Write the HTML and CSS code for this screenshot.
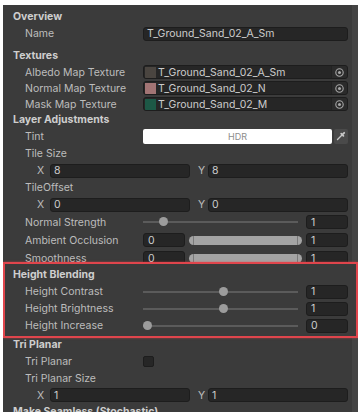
FILE: index.html
```html
<!DOCTYPE html>
<html>
<head>
<meta charset="utf-8">
<link rel="stylesheet" href="styles.css">
</head>
<body>
<div class="panel">
  <div class="group g-top">
    <div class="hdr">Overview</div>
    <div class="row"><span class="lbl">Name</span><div class="field">T_Ground_Sand_02_A_Sm</div></div>
  </div>
  <div class="sep"></div>
  <div class="group">
    <div class="hdr h-tex">Textures</div>
    <div class="row tex"><span class="lbl">Albedo Map Texture</span>
      <div class="field obj"><span class="sw sw-a"></span><span class="otext">T_Ground_Sand_02_A_Sm</span><span class="pick"><svg width="9" height="9" viewBox="0 0 9 9"><circle cx="4.5" cy="4.5" r="3.7" fill="none" stroke="#a8a8a8" stroke-width="1.1"/><circle cx="4.5" cy="4.5" r="1.5" fill="#a8a8a8"/></svg></span></div></div>
    <div class="row tex"><span class="lbl">Normal Map Texture</span>
      <div class="field obj"><span class="sw sw-n"></span><span class="otext">T_Ground_Sand_02_N</span><span class="pick"><svg width="9" height="9" viewBox="0 0 9 9"><circle cx="4.5" cy="4.5" r="3.7" fill="none" stroke="#a8a8a8" stroke-width="1.1"/><circle cx="4.5" cy="4.5" r="1.5" fill="#a8a8a8"/></svg></span></div></div>
    <div class="row tex"><span class="lbl">Mask Map Texture</span>
      <div class="field obj"><span class="sw sw-m"></span><span class="otext">T_Ground_Sand_02_M</span><span class="pick"><svg width="9" height="9" viewBox="0 0 9 9"><circle cx="4.5" cy="4.5" r="3.7" fill="none" stroke="#a8a8a8" stroke-width="1.1"/><circle cx="4.5" cy="4.5" r="1.5" fill="#a8a8a8"/></svg></span></div></div>
    <div class="hdr h-la">Layer Adjustments</div>
    <div class="row r18"><span class="lbl">Tint</span>
      <div class="tint"><div class="color">HDR</div><div class="eye"><svg width="10" height="10" viewBox="0 0 10 10"><path d="M1.5 8.5 L6 4" stroke="#c8c8c8" stroke-width="1.4" stroke-linecap="round"/><path d="M5.2 2.6 L7.4 4.8 M6.4 3.6 L8.2 1.8" stroke="#c8c8c8" stroke-width="1.8" stroke-linecap="round"/></svg></div></div></div>
    <div class="row"><span class="lbl">Tile Size</span></div>
    <div class="vec"><span class="vl">X</span><div class="field">8</div><span class="vl vy">Y</span><div class="field">8</div></div>
    <div class="row"><span class="lbl">TileOffset</span></div>
    <div class="vec"><span class="vl">X</span><div class="field">0</div><span class="vl vy">Y</span><div class="field">0</div></div>
    <div class="row r18"><span class="lbl">Normal Strength</span>
      <div class="slider"><div class="track"><span class="knob" style="left:10%"></span></div><div class="field num">1</div></div></div>
    <div class="row r18"><span class="lbl">Ambient Occlusion</span>
      <div class="range"><div class="field num">0</div><div class="rbar"><span class="rb"></span></div><div class="field num">1</div></div></div>
    <div class="row r18"><span class="lbl">Smoothness</span>
      <div class="range"><div class="field num">0</div><div class="rbar"><span class="rb"></span></div><div class="field num">1</div></div></div>
  </div>
  <div class="hl">
    <div class="hdr">Height Blending</div>
    <div class="row"><span class="lbl">Height Contrast</span>
      <div class="slider"><div class="track"><span class="knob" style="left:49%"></span></div><div class="field num">1</div></div></div>
    <div class="row"><span class="lbl">Height Brightness</span>
      <div class="slider"><div class="track"><span class="knob" style="left:49%"></span></div><div class="field num">1</div></div></div>
    <div class="row"><span class="lbl">Height Increase</span>
      <div class="slider"><div class="track"><span class="knob" style="left:0%"></span></div><div class="field num">0</div></div></div>
  </div>
  <div class="group">
    <div class="hdr">Tri Planar</div>
    <div class="row"><span class="lbl">Tri Planar</span><div class="ctl"><span class="check"></span></div></div>
    <div class="row"><span class="lbl">Tri Planar Size</span></div>
    <div class="vec v16"><span class="vl">X</span><div class="field">1</div><span class="vl vy">Y</span><div class="field">1</div></div>
    <div class="hdr">Make Seamless (Stochastic)</div>
  </div>
</div>
</body>
</html>
```
FILE: styles.css
```css
html, body { margin: 0; padding: 0; }
body {
  background: #ffffff;
  font-family: Inter, "Noto Sans", sans-serif;
  font-size: 10.5px;
  color: #bdbdbd;
}
.panel {
  margin: 5px 3px 0 3px;
  height: 407px;
  overflow: hidden;
  background: linear-gradient(to left, #444444 0 6px, #3b3b3b 6px);
  padding-right: 6px;
  display: flex;
  flex-direction: column;
}
.group { display: flex; flex-direction: column; }
.g-top { padding: 3px 0 2px; }
.sep { height: 3px; background: #313131; margin-right: -6px; }
.hdr {
  height: 17px;
  display: flex;
  align-items: center;
  padding-left: 10px;
  font-weight: 700;
  color: #cecece;
  white-space: nowrap;
}
.h-tex { height: 18px; padding-top: 2px; }
.h-la { height: 15px; }
.row {
  height: 17px;
  display: grid;
  grid-template-columns: 140px 1fr;
  align-items: center;
  padding-right: 4px;
}
.row.tex { height: 16px; }
.row.r18 { height: 18px; }
.lbl { padding-left: 22px; white-space: nowrap; }
.field {
  height: 14px;
  box-sizing: border-box;
  background: #262626;
  border: 1px solid #1d1d1d;
  border-radius: 3px;
  color: #cccccc;
  padding-left: 3px;
  display: flex;
  align-items: center;
  white-space: nowrap;
  overflow: hidden;
  min-width: 0;
}
.field.obj { padding-left: 1px; }
.sw { width: 11px; height: 11px; flex: none; margin-right: 2px; }
.sw-a { background: #4a4540; }
.sw-n { background: #a27474; }
.sw-m { background: #1d5846; }
.otext { flex: 1; }
.pick {
  width: 15px;
  height: 12px;
  flex: none;
  display: flex;
  align-items: center;
  justify-content: center;
  background: #2b2b2b;
  border-left: 1px solid #222;
}
.tint { display: flex; gap: 2px; height: 15px; }
.color {
  flex: 1;
  background: #ffffff;
  border-radius: 2px;
  color: #8c8c8c;
  font-size: 9px;
  display: flex;
  align-items: center;
  justify-content: center;
}
.eye {
  width: 14px;
  background: #4a4a4a;
  border-radius: 2px;
  display: flex;
  align-items: center;
  justify-content: center;
}
.vec {
  height: 17px;
  display: grid;
  grid-template-columns: 13px 1fr 18px 1fr;
  align-items: center;
  padding-left: 34px;
  padding-right: 4px;
}
.vec.v16 { height: 16px; }
.vy { padding-left: 8px; }
.slider {
  display: grid;
  grid-template-columns: 1fr 42px;
  gap: 4px;
  align-items: center;
}
.track {
  position: relative;
  height: 2px;
  background: #5b5b5b;
  margin: 0 4px 0 0;
}
.knob {
  position: absolute;
  top: -4px;
  width: 9px;
  height: 9px;
  border-radius: 50%;
  background: #9c9c9c;
}
.num { padding-left: 4px; }
.range {
  display: grid;
  grid-template-columns: 42px 1fr 42px;
  gap: 4px;
  align-items: center;
}
.rbar { height: 9px; display: flex; }
.rb {
  flex: 1;
  position: relative;
  background: #a4a4a4;
  border-radius: 5px;
}
.rb::before, .rb::after {
  content: "";
  position: absolute;
  top: 0;
  bottom: 0;
  width: 1px;
  background: #7a7a7a;
}
.rb::before { left: 4px; }
.rb::after { right: 4px; }
.hl {
  position: relative;
  z-index: 1;
  margin: -5px -6px -2px 0;
  border: 2px solid #e0454c;
  box-shadow: 0 0 2px rgba(224, 69, 76, 0.6);
  background: #3b3b3b;
  padding: 2px 0 2px;
  display: flex;
  flex-direction: column;
}
.hl .hdr { padding-left: 8px; }
.hl .row { grid-template-columns: 138px 1fr; padding-right: 8px; }
.hl .lbl { padding-left: 20px; }
.ctl { display: flex; align-items: center; }
.check {
  width: 11px;
  height: 11px;
  box-sizing: border-box;
  background: #262626;
  border: 1px solid #1d1d1d;
  border-radius: 2px;
}
```
